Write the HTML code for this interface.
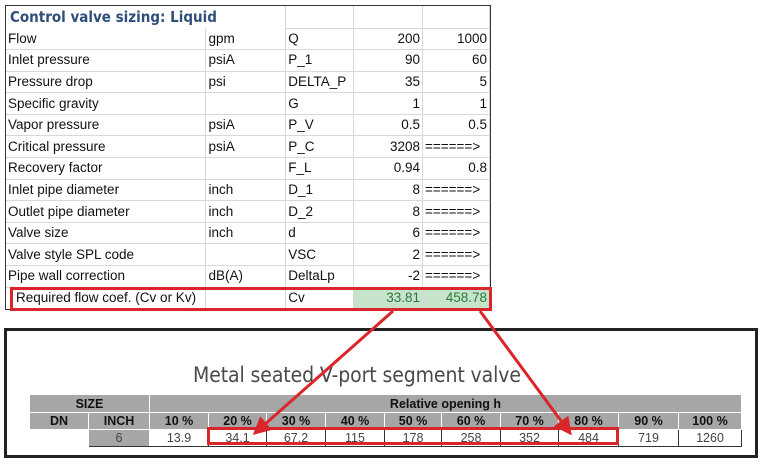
<!DOCTYPE html>
<html><head><meta charset="utf-8"><style>
body{margin:0;width:762px;height:467px;background:#fff;position:relative;overflow:hidden;font-family:"Liberation Sans",Arial,sans-serif;}
.top{position:absolute;left:5px;top:5px;width:486px;height:305px;border:1px solid #333;box-sizing:border-box;}
table.t{border-collapse:collapse;position:absolute;left:0;top:0;font-size:13.5px;color:#111;}
table.t td{height:21.6px;padding:0 2px;border-bottom:1px solid #d8d8d8;border-right:1px solid #d8d8d8;box-sizing:border-box;white-space:nowrap;line-height:20px}
table.t td.r{text-align:right}
.title td{height:22px!important;}
.bot{position:absolute;left:4px;top:328px;width:754px;height:130px;border:3px solid #222;box-sizing:border-box;}
.mt{position:absolute;left:193px;top:363px;font-size:21px;color:#4a4a4a;font-family:"DejaVu Sans Condensed","Liberation Sans",sans-serif;letter-spacing:-0.1px}
table.b{border-collapse:collapse;position:absolute;left:29px;top:394px;font-size:12.5px;font-family:"Liberation Sans Narrow","Liberation Sans",sans-serif;}
table.b td{border:1px solid #fff;text-align:center;padding:0;box-sizing:border-box}
.g{background:#a6a6a6;color:#111;font-weight:bold}
.w{background:#fff;color:#444;border:1px solid #333!important;border-top:none!important}
</style></head><body>
<div class="top">
<table class="t">
<colgroup><col style="width:200px"><col style="width:80px"><col style="width:68px"><col style="width:69px"><col style="width:67px"></colgroup>
<tr class="title"><td style="color:#2f4f7a;font-weight:bold;font-size:15px;font-family:'DejaVu Sans Condensed','DejaVu Sans','Liberation Sans',sans-serif;border-bottom:none;padding-left:4px" colspan="2">Control valve sizing: Liquid</td><td></td><td></td><td></td></tr>
<tr><td>Flow</td><td>gpm</td><td>Q</td><td class="r">200</td><td class="r">1000</td></tr>
<tr><td>Inlet pressure</td><td>psiA</td><td>P_1</td><td class="r">90</td><td class="r">60</td></tr>
<tr><td>Pressure drop</td><td>psi</td><td>DELTA_P</td><td class="r">35</td><td class="r">5</td></tr>
<tr><td>Specific gravity</td><td></td><td>G</td><td class="r">1</td><td class="r">1</td></tr>
<tr><td>Vapor pressure</td><td>psiA</td><td>P_V</td><td class="r">0.5</td><td class="r">0.5</td></tr>
<tr><td>Critical pressure</td><td>psiA</td><td>P_C</td><td class="r">3208</td><td>======&gt;</td></tr>
<tr><td>Recovery factor</td><td></td><td>F_L</td><td class="r">0.94</td><td class="r">0.8</td></tr>
<tr><td>Inlet pipe diameter</td><td>inch</td><td>D_1</td><td class="r">8</td><td>======&gt;</td></tr>
<tr><td>Outlet pipe diameter</td><td>inch</td><td>D_2</td><td class="r">8</td><td>======&gt;</td></tr>
<tr><td>Valve size</td><td>inch</td><td>d</td><td class="r">6</td><td>======&gt;</td></tr>
<tr><td>Valve style SPL code</td><td></td><td>VSC</td><td class="r">2</td><td>======&gt;</td></tr>
<tr><td>Pipe wall correction</td><td>dB(A)</td><td>DeltaLp</td><td class="r">-2</td><td>======&gt;</td></tr>
<tr><td style="padding-left:10px;border-bottom:none">Required flow coef. (Cv or Kv)</td><td style="border-bottom:none"></td><td style="border-bottom:none">Cv</td><td class="r" style="background:#c6e3cb;color:#2a7a3a;border-bottom:none">33.81</td><td class="r" style="background:#c6e3cb;color:#2a7a3a;border-bottom:none">458.78</td></tr>
</table>
</div>
<div style="position:absolute;left:10px;top:287px;width:482px;height:24px;border:3px solid #d9262a;box-sizing:border-box"></div>
<div class="bot"></div>
<div class="mt">Metal seated V-port segment valve</div>
<table class="b">
<colgroup><col style="width:59px"><col style="width:61px"><col style="width:59px"><col style="width:58px"><col style="width:59px"><col style="width:59px"><col style="width:57px"><col style="width:59px"><col style="width:58px"><col style="width:60px"><col style="width:60px"><col style="width:63px"></colgroup>
<tr style="height:18px"><td class="g" colspan="2">SIZE</td><td class="g" colspan="10">Relative opening h</td></tr>
<tr style="height:17px"><td class="g">DN</td><td class="g">INCH</td><td class="g">10 %</td><td class="g">20 %</td><td class="g">30 %</td><td class="g">40 %</td><td class="g">50 %</td><td class="g">60 %</td><td class="g">70 %</td><td class="g">80 %</td><td class="g">90 %</td><td class="g">100 %</td></tr>
<tr style="height:17px"><td style="background:#fff"></td><td class="g" style="font-weight:normal;color:#444;border-bottom:1px solid #333">6</td><td class="w">13.9</td><td class="w">34.1</td><td class="w">67.2</td><td class="w">115</td><td class="w">178</td><td class="w">258</td><td class="w">352</td><td class="w">484</td><td class="w">719</td><td class="w">1260</td></tr>
</table>
<div style="position:absolute;left:207px;top:427px;width:412px;height:18px;border:3px solid #d9262a;box-sizing:border-box"></div>
<svg style="position:absolute;left:0;top:0" width="762" height="467">
<defs><marker id="a" markerWidth="6" markerHeight="6" refX="5" refY="3" orient="auto" markerUnits="strokeWidth"><path d="M0,0 L6,3 L0,6 z" fill="#d9262a"/></marker></defs>
<line x1="393" y1="311" x2="255" y2="433" stroke="#d9262a" stroke-width="3" marker-end="url(#a)"/>
<line x1="480" y1="311" x2="570" y2="433" stroke="#d9262a" stroke-width="3" marker-end="url(#a)"/>
</svg>
</body></html>
